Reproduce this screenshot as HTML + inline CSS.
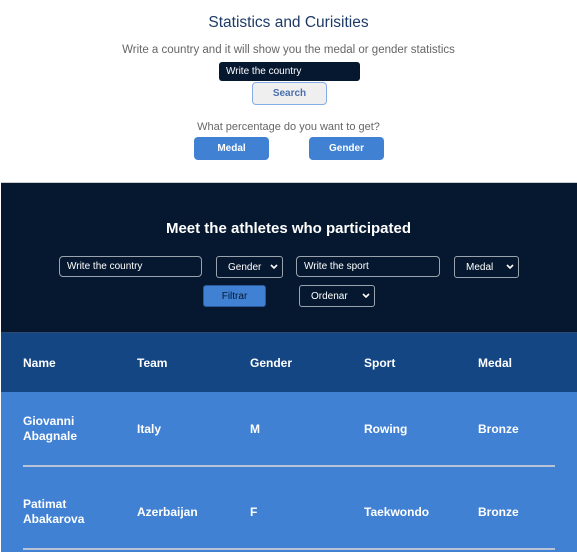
<!DOCTYPE html>
<html><head><meta charset="utf-8"><style>
*{box-sizing:border-box;margin:0;padding:0}
body{width:577px;height:552px;overflow:hidden;background:#fff;font-family:"Liberation Sans",sans-serif;position:relative}
.a{position:absolute}
.c{text-align:center;left:0;width:577px}
.inp,.sel{position:absolute;border:1px solid #9aa3ad;border-radius:4px;color:#fff;font-size:10px;padding-left:7px;background:#061830;display:flex;align-items:center}
.sel{border-radius:3px}
.sel svg{position:absolute;right:4px;top:50%;margin-top:-3px}
.btn{position:absolute;background:#4181d3;color:#fff;font-weight:bold;font-size:10px;border-radius:4px;display:flex;align-items:center;justify-content:center}
.th,.td{position:absolute;color:#fff;font-weight:bold;font-size:12px;line-height:15px}
.line{position:absolute;left:23px;width:532px;height:2px;background:#b8c4d6}
</style></head><body>
<div class="a c" style="top:14px;font-size:15.5px;color:#1e3a66;">Statistics and Curisities</div>
<div class="a c" style="top:44px;font-size:11.5px;color:#666;">Write a country and it will show you the medal or gender statistics</div>
<div class="a" style="left:219px;top:62px;width:141px;height:19px;background:#061830;border-radius:3px;color:#fff;font-size:10px;line-height:20px;padding-left:7px">Write the country</div>
<div class="a" style="left:252px;top:82px;width:75px;height:23px;background:#efefef;border:1px solid #86aee6;border-radius:4px;color:#4a6fae;font-weight:bold;font-size:10px;text-align:center;line-height:21px">Search</div>
<div class="a c" style="top:121px;font-size:11px;color:#666;">What percentage do you want to get?</div>
<div class="btn" style="left:194px;top:137px;width:75px;height:23px">Medal</div>
<div class="btn" style="left:309px;top:137px;width:75px;height:23px">Gender</div>

<div class="a" style="left:1px;top:182px;width:576px;height:150px;background:#061830;border-top:1px solid #ccc"></div>
<div class="a c" style="top:220px;font-size:15px;font-weight:bold;color:#fff">Meet the athletes who participated</div>
<div class="inp" style="left:59px;top:256px;width:143px;height:21px">Write the country</div>
<div class="sel" style="left:216px;top:256px;width:67px;height:22px;padding-left:11px">Gender<svg width="8" height="6"><path d="M1 1l3 3 3-3" stroke="#fff" stroke-width="1.6" fill="none"/></svg></div>
<div class="inp" style="left:296px;top:256px;width:144px;height:21px">Write the sport</div>
<div class="sel" style="left:454px;top:256px;width:65px;height:22px;padding-left:11px">Medal<svg width="8" height="6"><path d="M1 1l3 3 3-3" stroke="#fff" stroke-width="1.6" fill="none"/></svg></div>
<div class="a" style="left:203px;top:285px;width:63px;height:22px;background:#4181d3;border:1px solid #2a5a9a;border-radius:3px;color:#061830;font-size:10px;display:flex;align-items:center;justify-content:center">Filtrar</div>
<div class="sel" style="left:299px;top:285px;width:76px;height:22px;padding-left:11px">Ordenar<svg width="8" height="6"><path d="M1 1l3 3 3-3" stroke="#fff" stroke-width="1.6" fill="none"/></svg></div>

<div class="a" style="left:1px;top:332px;width:576px;height:60px;background:#134683;border-top:1px solid #2c4a70"></div>
<div class="a" style="left:1px;top:392px;width:576px;height:160px;background:#4181d3"></div>
<div class="th" style="left:23px;top:356px">Name</div>
<div class="th" style="left:137px;top:356px">Team</div>
<div class="th" style="left:250px;top:356px">Gender</div>
<div class="th" style="left:364px;top:356px">Sport</div>
<div class="th" style="left:478px;top:356px">Medal</div>

<div class="td" style="left:23px;top:414px">Giovanni<br>Abagnale</div>
<div class="td" style="left:137px;top:422px">Italy</div>
<div class="td" style="left:250px;top:422px">M</div>
<div class="td" style="left:364px;top:422px">Rowing</div>
<div class="td" style="left:478px;top:422px">Bronze</div>
<div class="line" style="top:465px"></div>

<div class="td" style="left:23px;top:497px">Patimat<br>Abakarova</div>
<div class="td" style="left:137px;top:505px">Azerbaijan</div>
<div class="td" style="left:250px;top:505px">F</div>
<div class="td" style="left:364px;top:505px">Taekwondo</div>
<div class="td" style="left:478px;top:505px">Bronze</div>
<div class="line" style="top:548px"></div>
</body></html>
